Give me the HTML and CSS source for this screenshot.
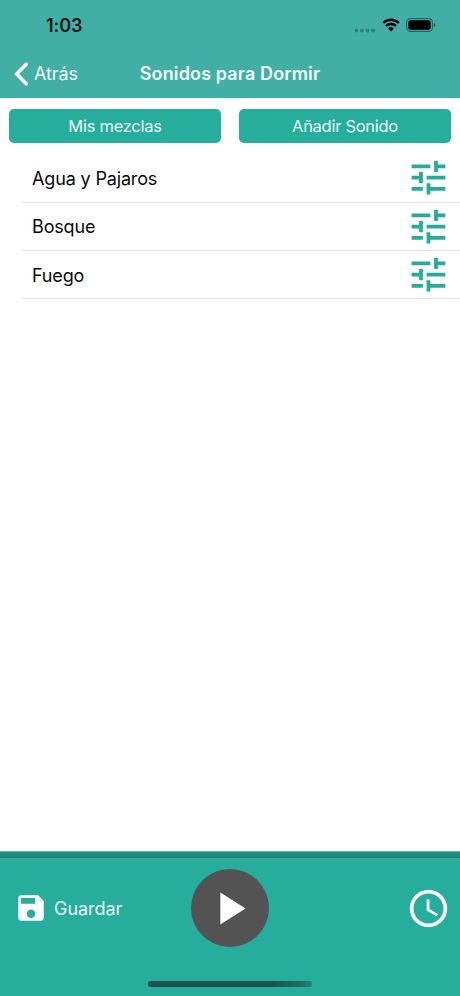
FILE: index.html
```html
<!DOCTYPE html>
<html lang="es">
<head>
<meta charset="utf-8">
<title>Sonidos para Dormir</title>
<link rel="stylesheet" href="styles.css">
</head>
<body>
<svg class="defs" width="0" height="0" aria-hidden="true">
  <symbol id="tune" viewBox="0 0 24 24"><path d="M3 17v2h6v-2H3zM3 5v2h10V5H3zm10 16v-2h8v-2h-8v-2h-2v6h2zM7 9v2H3v2h4v2h2V9H7zm14 4v-2H11v2h10zm-6-4h2V7h4V5h-4V3h-2v6z"/></symbol>
</svg>
<div class="screen">
  <header class="header">
    <div class="status">
      <span class="time">1:03</span>
      <div class="indicators">
        <svg class="signal" width="22" height="5" viewBox="0 0 22 5"><circle cx="2.5" cy="2.5" r="1.9"/><circle cx="8" cy="2.5" r="1.9"/><circle cx="13.6" cy="2.5" r="1.9"/><circle cx="19.2" cy="2.5" r="1.9"/></svg>
        <svg class="wifi" width="18" height="14" viewBox="0 0 18 14">
          <path d="M1.2 5A11 11 0 0 1 16.8 5M4 8A7.1 7.1 0 0 1 14 8" fill="none" stroke="#000" stroke-width="2.4"/>
          <path d="M9 13.4 6.1 10.5a4.1 4.1 0 0 1 5.8 0z"/>
        </svg>
        <svg class="battery" width="30" height="14" viewBox="0 0 30 14">
          <rect x=".6" y=".6" width="25.8" height="12.8" rx="3.8" fill="none" stroke="#000" stroke-opacity=".42" stroke-width="1.1"/>
          <rect x="2.3" y="2.3" width="22.4" height="9.4" rx="2.2"/>
          <path d="M27.7 4.7q1.8.7 1.8 2.3t-1.8 2.3z" fill-opacity=".45"/>
        </svg>
      </div>
    </div>
    <nav class="nav">
      <a class="back">
        <svg width="15" height="24" viewBox="0 0 15 24"><path d="M12.2 2.2 2.7 12l9.5 9.8" fill="none" stroke="#fff" stroke-width="3.6" stroke-linecap="round" stroke-linejoin="miter"/></svg>
        <span>Atrás</span>
      </a>
      <h1 class="title">Sonidos para Dormir</h1>
    </nav>
  </header>
  <main class="content">
    <div class="tabs">
      <button class="tab">Mis mezclas</button>
      <button class="tab">Añadir Sonido</button>
    </div>
    <ul class="sounds">
      <li class="sound"><span class="sound-name">Agua y Pajaros</span><svg class="tune"><use href="#tune"/></svg></li>
      <li class="sound"><span class="sound-name">Bosque</span><svg class="tune"><use href="#tune"/></svg></li>
      <li class="sound"><span class="sound-name">Fuego</span><svg class="tune"><use href="#tune"/></svg></li>
    </ul>
  </main>
  <footer class="player">
    <div class="controls">
      <a class="save">
        <svg width="34" height="34" viewBox="0 0 24 24"><path d="M17 3H5c-1.11 0-2 .9-2 2v14c0 1.1.89 2 2 2h14c1.1 0 2-.9 2-2V7l-4-4zm-5 16c-1.66 0-3-1.34-3-3s1.34-3 3-3 3 1.34 3 3-1.34 3-3 3zm3-10H5V5h10v4z"/></svg>
        <span class="save-label">Guardar</span>
      </a>
      <button class="play" aria-label="Reproducir"><svg width="55" height="55" viewBox="0 0 24 24"><path d="M8 5v14l11-7z"/></svg></button>
      <svg class="clock" width="45" height="45" viewBox="0 0 24 24"><path d="M11.99 2C6.47 2 2 6.48 2 12s4.47 10 9.99 10C17.52 22 22 17.52 22 12S17.52 2 11.99 2zM12 20c-4.42 0-8-3.58-8-8s3.58-8 8-8 8 3.58 8 8-3.58 8-8 8zM12.5 7H11v6l5.25 3.15.75-1.23-4.5-2.67z"/></svg>
    </div>
    <div class="home"></div>
  </footer>
</div>
</body>
</html>
```
FILE: styles.css
```css
* { box-sizing: border-box; }
body { margin: 0; font-family: Inter, "Liberation Sans", sans-serif; }
svg { display: block; flex: none; }
.defs { position: absolute; }
button { border: 0; padding: 0; font: inherit; color: inherit; }
.screen { width: 460px; height: 996px; display: flex; flex-direction: column; background: #fff; overflow: hidden; }
.header { height: 98px; background: #41afa5; }
.status { height: 49px; padding: 2px 24px 0 46px; display: flex; align-items: center; justify-content: space-between; }
.time { font-size: 18px; font-weight: 600; line-height: 24px; letter-spacing: -.1px; color: #04140f; }
.indicators { display: flex; align-items: center; }
.signal { margin: 9px 6px 0 0; fill: #2b8177; }
.wifi { margin: -1px 6px 0 0; }
.battery { margin-top: -1px; }
.nav { height: 49px; padding: 0 14px; display: grid; grid-template-columns: 1fr auto 1fr; align-items: center; color: #fff; }
.back { display: flex; align-items: center; gap: 5px; font-size: 18px; line-height: 24px; letter-spacing: -.1px; color: #f0fffc; }
.title { margin: 0; font-size: 18px; line-height: 24px; font-weight: 600; letter-spacing: .13px; white-space: nowrap; color: #f4fffd; }
.content { flex: 1; }
.tabs { padding: 11px 9px 0; display: grid; grid-template-columns: 1fr 1fr; gap: 18px; }
.tab { height: 33.5px; border-radius: 5px; background: #26ad9b; color: #e9fffb; font-size: 16.5px; line-height: 24px; letter-spacing: -.28px; }
.sounds { margin: 11.7px 0 0; padding: 0 0 0 22px; list-style: none; }
.sound { height: 48.4px; padding: 0 9px 0 10px; display: flex; align-items: center; justify-content: space-between; border-bottom: 1px solid #e7e7e7; font-size: 18px; line-height: 24px; letter-spacing: -.15px; color: #080808; }
.sound-name { padding-top: 2px; }
.tune { width: 45px; height: 45px; fill: #26ab9a; }
.player { height: 145px; background: #26ad9b; }
.player::before { content: ""; display: block; height: 7px; background: linear-gradient(#5abeb0 0 1px, #259382 1px, #1f8273 7px); }
.controls { height: 100px; padding: 0 14px; display: grid; grid-template-columns: 1fr 78px 1fr; align-items: center; color: #fff; }
.save { display: flex; align-items: center; gap: 6px; font-size: 18px; line-height: 24px; letter-spacing: -.05px; color: #eafffb; }
.save-label { padding-top: 2px; }
.controls svg { fill: #fff; }
.play { width: 78px; height: 78px; border-radius: 50%; background: #535353; display: flex; align-items: center; justify-content: center; }
.play svg { margin-left: -1px; }
.clock { justify-self: end; margin-right: -5px; }
.home { width: 164px; height: 6px; margin: 23px auto 0; border-radius: 3px; background: linear-gradient(90deg, #1e5249 75%, #1d7163 94%, #1f8474); }
```
